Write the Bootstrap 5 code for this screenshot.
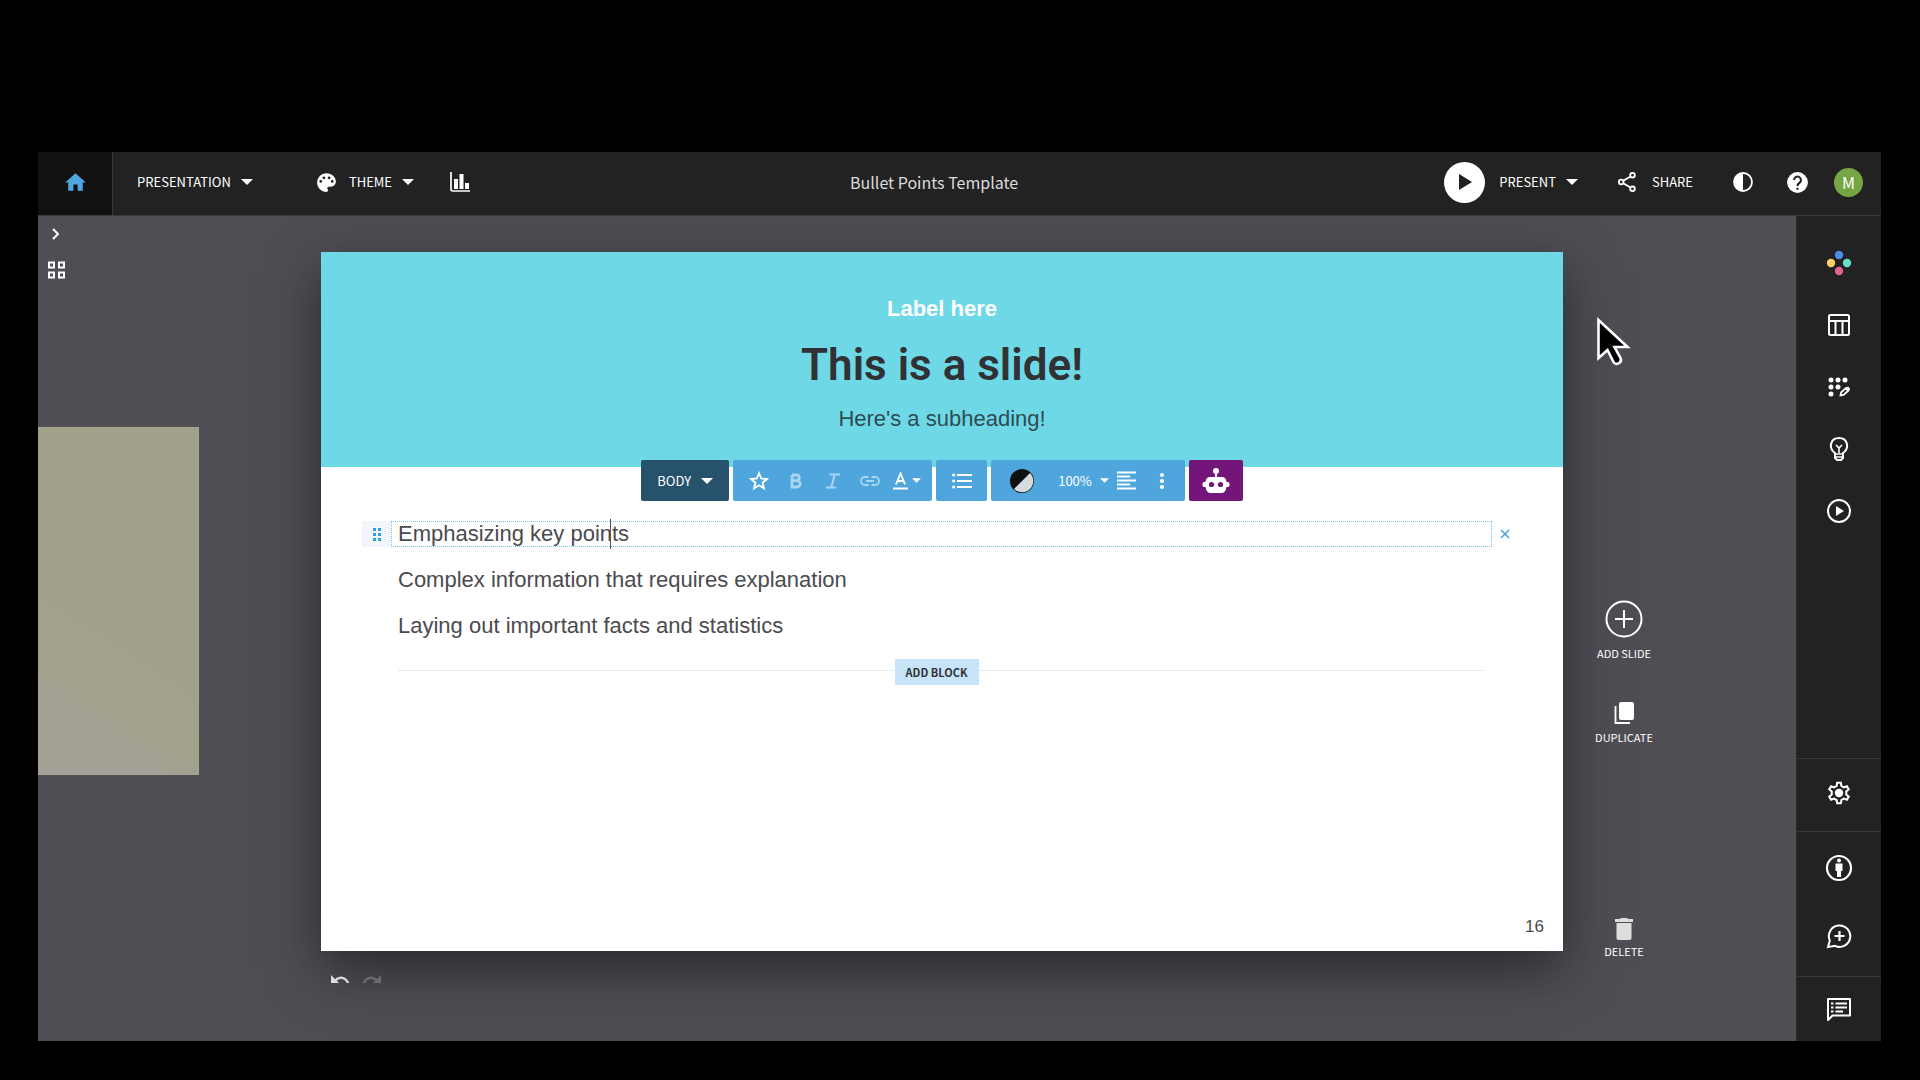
<!DOCTYPE html>
<html lang="en">
<head>
<meta charset="utf-8">
<meta name="viewport" content="width=device-width, initial-scale=1">
<title>Bullet Points Template</title>
<link href="https://cdn.jsdelivr.net/npm/bootstrap@5.3.0/dist/css/bootstrap.min.css" rel="stylesheet">
<style>
  body { background: #000; font-family: "Noto Sans CJK SC", "Noto Sans", sans-serif; color: #fff; font-size: 13px; line-height: 20px; }
  button { font-family: inherit; }
  svg { display: block; flex: none; }
  .plain { border: 0; padding: 0; background: none; color: inherit; display: flex; align-items: center; justify-content: center; }
  .shell { padding: 152px 39px 39px 38px; }
  .topbar { height: 64px; background: #222223; border-bottom: 1px solid #3a3a3d; font-weight: 500; }
  .topbar > * { padding-bottom: 3px; }
  .home-link { width: 75px; background: #111; border-right: 1px solid #39393b; }
  .menu-gap { gap: 10px; }
  .theme-btn { margin-left: 61px; }
  .chart-btn { margin-left: 36px; }
  .account-btn { margin: 0 18px 0 24px; }
  .doc-title { font-size: 16px; font-weight: 400; color: #dcdcdc; padding-right: 46px; }
  .play-disc { width: 41px; height: 41px; border-radius: 50%; background: #fff; }
  .avatar { width: 29px; height: 29px; border-radius: 50%; background: #76a543; font-size: 16px; }
  .stage { background: #4f4e54; position: relative; overflow: hidden; }
  .side-left { width: 283px; position: relative; }
  .side-right { width: 233px; position: relative; }
  .prev-slide { position: absolute; left: 0; top: 211px; width: 161px; height: 348px;
    background: linear-gradient(33deg, #a3a095 0, #a3a095 19%, #a2a18a 25%, #a1a08a 100%); border: 1px solid #a8a692; border-left: 0; }
  .slide { margin-top: 36px; aspect-ratio: 16 / 9; background: #fff; position: relative; box-shadow: 0 18px 52px rgba(15,20,24,.62); font-family: "Liberation Sans", Arial, sans-serif; color: #4b4b4f; }
  .slide-head { height: 215px; background: #6fd8e6; padding-top: 41px; }
  .slide-label { font-size: 22px; line-height: 32px; font-weight: 700; color: #fff; }
  .slide-title { font-family: Roboto, "Liberation Sans", sans-serif; font-size: 44px; line-height: 56px; font-weight: 600; color: #303134; margin: 12px 0; }
  .slide-sub { font-size: 22px; line-height: 28px; color: #2e4c55; margin: 0; }
  .toolbar { position: absolute; top: 208px; left: 0; right: 0; gap: 4px; font-family: "Noto Sans CJK SC", sans-serif; color: #fff; font-weight: 500; }
  .tool-set { height: 41px; background: #4fa6dd; border-radius: 2px; }
  .tool-pad { padding: 0 7px; }
  .tool-set .plain { width: 37px; height: 41px; }
  .tool-set .faint { color: #a9d5f0; }
  .tool-set .zoom-btn { width: auto; margin-left: 10px; padding: 0 8px; }
  .body-btn { width: 88px; background: #26526b; }
  .bot-btn { width: 54px; background: #731579; }
  .slide-body { padding: 54px 53px 0 41px; }
  .bullet-row { height: 26px; margin-bottom: 20px; }
  .grip { width: 29px; height: 26px; background: #f2f6fb; }
  .bullet-text { font-size: 22px; line-height: 26px; padding-left: 36px; }
  .bullet-edit { height: 26px; border: 1px dotted #7cc1ec; position: relative; }
  .bullet-edit input { border: 0; outline: 0; padding: 0 6px; width: 100%; height: 24px; font-size: 22px; line-height: 24px; color: inherit; background: none; font-family: inherit; display: block; }
  .text-caret { position: absolute; left: 218px; top: -3px; width: 1px; height: 30px; background: #555; }
  .add-row { position: relative; margin: 0 26px 0 37px; padding-right: 10px; }
  .add-row::before { content: ""; position: absolute; left: 0; right: 0; top: 11px; border-top: 1px dotted #c3ddf0; }
  .add-block { position: relative; background: #c6e3f7; color: #303338; font-size: 11px; font-weight: 700; line-height: 26px; width: 84px; font-family: "Noto Sans CJK SC", sans-serif; }
  .page-no { position: absolute; right: 19px; bottom: 12px; font-size: 17px; line-height: 24px; }
  .undo-row { height: 8px; overflow: hidden; margin: 24px 0 58px 9px; gap: 12px; }
  .slide-actions { width: 122px; padding-top: 384px; font-size: 11px; line-height: 16px; }
  .slide-actions .plain { flex-direction: column; }
  .add-btn { gap: 7px; }
  .delete-btn { margin-top: 172px; gap: 2px; }
  .pointer-mark { position: absolute; left: 33px; top: 98px; }
  .rail { width: 85px; background: #222223; border-left: 1px solid #2c2c2e; }
  .rail .plain { height: 62px; width: 100%; }
  .rail-group { border-top: 1px solid #3a3a3d; }
  .rail .rail-tall { height: 72px; }
  .rail .rail-tall.plain { padding-bottom: 4px; }
  .rail .rail-last { height: 64px; }
</style>
</head>
<body>
<div class="shell min-vh-100 d-flex flex-column">
  <header class="topbar d-flex align-items-stretch">
    <a href="#" class="home-link d-flex align-items-center justify-content-center" aria-label="Home">
      <svg width="25" height="25" viewBox="0 0 24 24" fill="#4fa6df"><path d="M10 20v-6h4v6h5v-8h3L12 3 2 12h3v8z"/></svg>
    </a>
    <button class="plain menu-gap ms-4">PRESENTATION <svg width="12" height="6" viewBox="0 0 12 6" fill="#fff"><path d="M0 0h12L6 6z"/></svg></button>
    <button class="plain menu-gap theme-btn"><svg width="25" height="25" viewBox="0 0 24 24"><path fill="#fff" d="M12 3c-4.970 0-9 4.030-9 9s4.030 9 9 9c.83 0 1.500-.67 1.500-1.500 0-.39-.15-.74-.39-1.010-.23-.26-.38-.61-.38-.99 0-.83.67-1.500 1.500-1.500H16c2.760 0 5-2.240 5-5 0-4.420-4.030-8-9-8z"/><g fill="#222"><circle cx="6.500" cy="11" r="1.300"/><circle cx="9.500" cy="7.500" r="1.300"/><circle cx="14.500" cy="7.500" r="1.300"/><circle cx="17.500" cy="11" r="1.300"/></g></svg>THEME <svg width="12" height="6" viewBox="0 0 12 6" fill="#fff"><path d="M0 0h12L6 6z"/></svg></button>
    <button class="plain chart-btn" aria-label="Charts"><svg width="20" height="20" viewBox="0 0 20 20"><path d="M1 0v17.500q0 1.500 1.500 1.500H20" fill="none" stroke="#fff" stroke-width="1.700"/><path fill="#fff" d="M4 7h4v10H4zM9.500 2h4v15h-4zM15 11h4v6h-4z"/></svg></button>
    <div class="doc-title flex-fill d-flex align-items-center justify-content-center">Bullet Points Template</div>
    <button class="plain menu-gap"><span class="play-disc d-flex align-items-center justify-content-center"><svg width="16" height="18" viewBox="0 0 16 18"><path d="M2 1l13 8-13 8z" fill="#202022"/></svg></span><span class="ps-1">PRESENT</span> <svg width="12" height="6" viewBox="0 0 12 6" fill="#fff"><path d="M0 0h12L6 6z"/></svg></button>
    <button class="plain gap-3 ms-4 ps-3"><svg width="18" height="20" viewBox="0 0 18 20" fill="none" stroke="#fff" stroke-width="1.800"><circle cx="3.200" cy="10" r="2.300"/><circle cx="14.500" cy="3.200" r="2.300"/><circle cx="14.500" cy="16.800" r="2.300"/><path d="M5.200 8.800l7.300-4.400M5.200 11.200l7.300 4.400"/></svg>SHARE</button>
    <button class="plain ms-4 ps-3" aria-label="Contrast"><svg width="20" height="20" viewBox="0 0 20 20"><circle cx="10" cy="10" r="9" fill="none" stroke="#fff" stroke-width="1.800"/><path d="M10 1a9 9 0 0 0 0 18z" fill="#fff"/></svg></button>
    <button class="plain ms-4 ps-2" aria-label="Help"><svg width="25" height="25" viewBox="0 0 24 24"><circle cx="12" cy="12" r="10" fill="#fff"/><path d="M8.700 9.600a3.300 3.300 0 1 1 5.400 2.500c-1.300 1-2.100 1.600-2.100 3.200" fill="none" stroke="#222" stroke-width="2"/><path d="M11 17h2v2h-2z" fill="#222"/></svg></button>
    <button class="plain account-btn" aria-label="Account"><span class="avatar d-flex align-items-center justify-content-center">M</span></button>
  </header>

  <div class="d-flex flex-fill">
    <main class="stage d-flex flex-fill">
      <div class="side-left flex-shrink-0">
        <button class="plain ms-2 mt-2" aria-label="Expand"><svg class="mx-1" width="12" height="20" viewBox="0 0 12 20" fill="none" stroke="#fff" stroke-width="2"><path d="M3 5l5 5-5 5"/></svg></button>
        <button class="plain ms-2 pt-3" aria-label="Slide grid"><svg width="20" height="20" viewBox="0 0 20 20" fill="none" stroke="#fff" stroke-width="2"><path d="M3 2.500h5v5H3zM13 2.500h5v5h-5zM3 12.500h5v5H3zM13 12.500h5v5h-5z"/></svg></button>
        <div class="prev-slide"></div>
      </div>
      <div class="flex-fill">
        <section class="slide">
          <div class="slide-head text-center">
            <div class="slide-label">Label here</div>
            <h1 class="slide-title">This is a slide!</h1>
            <p class="slide-sub">Here's a subheading!</p>
          </div>
          <div class="toolbar d-flex justify-content-center">
            <button class="plain tool-set menu-gap body-btn">BODY <svg width="12" height="6" viewBox="0 0 12 6" fill="#fff"><path d="M0 0h12L6 6z"/></svg></button>
            <div class="tool-set tool-pad d-flex">
              <button class="plain" aria-label="Star"><svg width="20" height="20" viewBox="0 0 20 20" fill="none" stroke="#fff" stroke-width="1.800"><path d="M10 2.200l2.200 5.300 5.700.5-4.300 3.700 1.300 5.600-4.900-3-4.900 3 1.300-5.600L2.100 8l5.700-.5z"/></svg></button>
              <button class="plain faint" aria-label="Bold"><svg width="14" height="16" viewBox="0 0 14 16" fill="none" stroke="currentColor" stroke-width="2.800"><path d="M3 2v12h5a3.200 3.200 0 0 0 0-6.400H3M3 2h4.500a2.800 2.800 0 0 1 0 5.600"/></svg></button>
              <button class="plain faint" aria-label="Italic"><svg width="16" height="16" viewBox="0 0 16 16" fill="none" stroke="currentColor" stroke-width="2"><path d="M4.500 1.500H15M1 14.500h10M9.800 1.500l-3.600 13"/></svg></button>
              <button class="plain faint" aria-label="Link"><svg width="20" height="12" viewBox="0 0 20 12" fill="none" stroke="currentColor" stroke-width="1.800"><path d="M8.500 2H5a4 4 0 0 0 0 8h3.500M11.500 2H15a4 4 0 0 1 0 8h-3.500M6 6h8"/></svg></button>
              <button class="plain gap-1" aria-label="Text colour"><svg width="15" height="18" viewBox="0 0 15 18" fill="none" stroke="#fff" stroke-width="1.900"><path d="M3 12.500L7.500 1.500 12 12.500M4.500 9h6M0 16.500h15"/></svg><svg width="9" height="5" viewBox="0 0 12 6" fill="#fff"><path d="M0 0h12L6 6z"/></svg></button>
            </div>
            <div class="tool-set tool-pad d-flex">
              <button class="plain" aria-label="List"><svg width="20" height="18" viewBox="0 0 20 18"><path d="M5 3h15M5 9h15M5 15h15" stroke="#fff" stroke-width="1.800"/><g fill="#fff"><circle cx="1.700" cy="3" r="1.600"/><circle cx="1.700" cy="9" r="1.600"/><circle cx="1.700" cy="15" r="1.600"/></g></svg></button>
            </div>
            <div class="tool-set d-flex ps-2 pe-1">
              <button class="plain ms-1" aria-label="Fill"><svg width="26" height="26" viewBox="0 0 26 26"><circle cx="13" cy="13" r="12" fill="#111"/><path d="M21 5a11.300 11.300 0 0 1-16 16z" fill="#d4dade"/></svg></button>
              <button class="plain gap-2 zoom-btn">100% <svg width="9" height="5" viewBox="0 0 12 6" fill="#fff"><path d="M0 0h12L6 6z"/></svg></button>
              <button class="plain px-0 w-auto" aria-label="Align"><svg class="me-2" width="19" height="19" viewBox="0 0 19 19"><path d="M0 1.500h19M0 5.500h13M0 9.500h19M0 13.500h13M0 17.500h19" stroke="#fff" stroke-width="1.800"/></svg></button>
              <button class="plain" aria-label="More"><svg width="6" height="18" viewBox="0 0 6 18" fill="#fff"><circle cx="3" cy="3" r="2.100"/><circle cx="3" cy="9" r="2.100"/><circle cx="3" cy="15" r="2.100"/></svg></button>
            </div>
            <button class="plain tool-set bot-btn" aria-label="Assistant"><svg width="28" height="28" viewBox="0 0 28 28"><circle cx="14" cy="4" r="3" fill="#fff"/><path d="M14 4v8" stroke="#fff" stroke-width="2"/><path fill="#fff" d="M8 10h12q4 0 4.500 5H26q1.500 0 1.500 2v1q0 2-1.500 2h-1.500q-1 6-5 6h-11q-4 0-5-6H2Q.5 20 .5 18v-1Q.5 15 2 15h1.500Q4 10 8 10z"/><g fill="#731579"><circle cx="9.500" cy="17.500" r="2.600"/><circle cx="18.500" cy="17.500" r="2.600"/></g></svg></button>
          </div>
          <div class="slide-body">
            <div class="bullet-row d-flex align-items-center">
              <button class="plain grip" aria-label="Move"><svg width="8" height="13" viewBox="0 0 8 13" fill="#2f9fe0"><path d="M0 0h3v3H0zM5 0h3v3H5zM0 5h3v3H0zM5 5h3v3H5zM0 10h3v3H0zM5 10h3v3H5z"/></svg></button>
              <div class="bullet-edit flex-fill"><input type="text" value="Emphasizing key points" aria-label="Bullet text"><span class="text-caret"></span></div>
              <button class="plain ps-2" aria-label="Remove"><svg width="10" height="10" viewBox="0 0 10 10" stroke="#45a4dc" stroke-width="1.600"><path d="M1 1l8 8M9 1l-8 8"/></svg></button>
            </div>
            <div class="bullet-row bullet-text">Complex information that requires explanation</div>
            <div class="bullet-row bullet-text">Laying out important facts and statistics</div>
            <div class="add-row d-flex justify-content-center"><button class="plain add-block">ADD BLOCK</button></div>
          </div>
          <div class="page-no">16</div>
        </section>
        <div class="undo-row d-flex">
          <button class="plain align-items-start" aria-label="Undo"><svg width="20" height="20" viewBox="0 0 20 20"><path d="M4 8C7 1.500 15 0 18.500 9" fill="none" stroke="#fff" stroke-width="2.400"/><path d="M1 0v9h9z" fill="#fff"/></svg></button>
          <button class="plain align-items-start" aria-label="Redo"><svg width="20" height="20" viewBox="0 0 20 20"><path d="M16 8C13 1.500 5 0 1.500 9" fill="none" stroke="#858588" stroke-width="2.400"/><path d="M19 0v9h-9z" fill="#858588"/></svg></button>
        </div>
      </div>
      <div class="side-right flex-shrink-0">
        <div class="slide-actions d-flex flex-column align-items-center">
          <button class="plain add-btn"><svg width="38" height="38" viewBox="0 0 38 38" fill="none" stroke="#fff" stroke-width="2"><circle cx="19" cy="19" r="17.500"/><path d="M10 19h18M19 10v18"/></svg>ADD SLIDE</button>
          <button class="plain mt-4 pt-3"><svg width="20" height="24" viewBox="0 0 20 24"><rect x="5" y="1" width="15" height="18" rx="2" fill="#fff"/><path d="M1.500 5v17H16" fill="none" stroke="#fff" stroke-width="1.800"/></svg><span class="pt-1">DUPLICATE</span></button>
          <button class="plain delete-btn"><svg width="18" height="24" viewBox="0 0 18 24" fill="#dedede"><path d="M0 2h5l1-1h6l1 1h5v3H0zM1.500 6h15v15q0 2-2 2h-11q-2 0-2-2z"/></svg>DELETE</button>
        </div>
        <svg class="pointer-mark" width="36" height="56" viewBox="0 0 36 56"><path d="M2.500 6v38l9-8 6 12c2 4 9 1 7-4l-6-11h13z" fill="#000" stroke="#fff" stroke-width="2.600"/></svg>
      </div>
    </main>

    <nav class="rail d-flex flex-column flex-shrink-0" aria-label="Tools">
      <div class="flex-fill pt-3">
        <button class="plain" aria-label="Elements"><svg width="26" height="26" viewBox="0 0 26 26"><circle cx="13" cy="5" r="4.200" fill="#4b8de8"/><circle cx="5" cy="13" r="4.200" fill="#fbd163"/><circle cx="21" cy="13" r="4.200" fill="#69dfc8"/><circle cx="13" cy="21" r="4.200" fill="#e0648b"/></svg></button>
        <button class="plain" aria-label="Layout"><svg width="22" height="22" viewBox="0 0 22 22" fill="none" stroke="#fff" stroke-width="2"><rect x="1" y="1" width="20" height="20" rx="1.500"/><path d="M1 7h20M7.500 7v14M14.500 7v14"/></svg></button>
        <button class="plain" aria-label="Style"><svg width="22" height="22" viewBox="0 0 22 22"><g fill="#fff"><circle cx="3" cy="4" r="2.500"/><circle cx="10" cy="4" r="2.500"/><circle cx="17" cy="4" r="2.500"/><circle cx="3" cy="11" r="2.500"/><circle cx="10" cy="11" r="2.500"/><circle cx="3" cy="18" r="2.500"/></g><path d="M12.500 19.500l.5-3 5-4.500q2-1 2.800.5.700 1.300-.8 2.500l-4.500 4z" fill="none" stroke="#fff" stroke-width="1.800"/><path d="M17 13l3 3 1-3-2-2z" fill="#fff"/></svg></button>
        <button class="plain" aria-label="Ideas"><svg width="20" height="26" viewBox="0 0 20 26" fill="none" stroke="#fff" stroke-width="2"><path d="M6 17C-1 12 1.500 2 10 2s11 10 4 15v5l-2 2H8l-2-2z"/><path d="M6 18h8M6 21h8M10 17v-5M7 9l3 3 3-3" stroke-width="1.600"/></svg></button>
        <button class="plain" aria-label="Animate"><svg width="26" height="26" viewBox="0 0 26 26"><circle cx="13" cy="13" r="11" fill="none" stroke="#fff" stroke-width="2"/><path d="M10 8l8 5-8 5z" fill="#fff"/></svg></button>
      </div>
      <div class="rail-group"><button class="plain rail-tall" aria-label="Settings"><svg width="26" height="26" viewBox="0 0 24 24"><path fill="none" stroke="#fff" stroke-width="1.900" d="M10.300 2.500h3.400l.5 3 2.200 1.300 2.900-1.100 1.700 2.900-2.300 2v2.800l2.300 2-1.700 2.900-2.900-1.100-2.200 1.300-.5 3h-3.400l-.5-3-2.200-1.300-2.900 1.100L3 15.400l2.300-2v-2.800L3 8.600l1.700-2.900 2.900 1.100 2.200-1.300z"/><circle cx="12" cy="12" r="3.900" fill="#fff"/></svg></button></div>
      <div class="rail-group">
        <button class="plain rail-tall pb-0" aria-label="Accessibility"><svg width="28" height="28" viewBox="0 0 28 28"><circle cx="14" cy="14" r="12" fill="none" stroke="#fff" stroke-width="2.200"/><circle cx="14" cy="6.500" r="2" fill="#fff"/><path d="M10.500 9.500h7v7.500H16v6h-4v-6h-1.500z" fill="#fff"/></svg></button>
        <button class="plain rail-tall" aria-label="Comments"><svg class="mb-1" width="26" height="26" viewBox="0 0 26 26" fill="none" stroke="#fff" stroke-width="2"><path d="M2 24l1.800-6.500A10.700 10.700 0 1 1 9 22.800z"/><path d="M13.500 8v10M8.500 13h10" stroke-width="2.200"/></svg></button>
      </div>
      <div class="rail-group"><button class="plain rail-last" aria-label="Notes"><svg width="26" height="26" viewBox="0 0 26 26" fill="none" stroke="#fff" stroke-width="2"><path d="M2 24V3h22v16.500H6.500z" stroke-linejoin="round"/><path d="M9.500 7.500H21M9.500 11.500H21M9.500 15.500H17M5 7.500h2.500M5 11.500h2.500M5 15.500h2.500"/></svg></button></div>
    </nav>
  </div>
</div>
<script src="https://cdn.jsdelivr.net/npm/bootstrap@5.3.0/dist/js/bootstrap.bundle.min.js"></script>
</body>
</html>
